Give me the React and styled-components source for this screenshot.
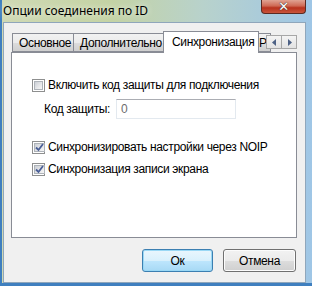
import React from "react";
import styled, { createGlobalStyle } from "styled-components";

const Global = createGlobalStyle`
  html, body {
    margin: 0;
    padding: 0;
    overflow: hidden;
  }
  body {
    font-family: "Liberation Sans", Arial, sans-serif;
    font-size: 12px;
    letter-spacing: -0.35px;
    color: #000;
  }
`;

const Window = styled.div`
  width: 312px;
  height: 286px;
  box-sizing: border-box;
  display: flex;
  flex-direction: column;
  background: linear-gradient(90deg, #cfd9b4 0%, #c4d3a4 35%, #b8d2cc 65%, #9fc6e6 100%);
  border-left: 2px solid #3f7fbf;
  border-bottom: 3px solid #3f7fbf;
`;

const TitleBar = styled.div`
  height: 22px;
  display: flex;
  align-items: flex-start;
  justify-content: space-between;
`;

const Title = styled.div`
  padding: 3px 0 0 1px;
  font-family: "Noto Sans", "Open Sans", sans-serif;
  font-size: 12px;
  letter-spacing: 0;
  line-height: 16px;
  text-shadow: 0 0 6px rgba(255, 255, 255, 0.9);
`;

const CloseButton = styled.div`
  width: 45px;
  height: 14px;
  margin-right: 6px;
  box-sizing: border-box;
  border: 1px solid #5b2a22;
  border-top: none;
  border-radius: 0 0 4px 4px;
  background: linear-gradient(180deg, #e0a393 0%, #cf6a55 45%, #b8321d 60%, #c9553c 100%);
  display: flex;
  align-items: center;
  justify-content: center;
  color: #fff;
  font-family: "DejaVu Sans", sans-serif;
  font-weight: bold;
  font-size: 13px;
  line-height: 13px;
  text-shadow: 0 0 1px #333, 0 0 1px #333;
`;

const Client = styled.div`
  flex: 1;
  margin-right: 6px;
  margin-left: 1px;
  background: #f0f0f0;
  border: 1px solid #8fa6bb;
  display: flex;
  flex-direction: column;
  padding: 8px 8px 9px 7px;
`;

const TabStrip = styled.div`
  height: 21px;
  display: flex;
  align-items: flex-end;
  position: relative;
  padding-left: 1px;
`;

const Tab = styled.div`
  box-sizing: border-box;
  height: ${(p) => (p.$active ? "22px" : "19px")};
  margin: ${(p) => (p.$active ? "0 -2px -1px -2px" : "0")};
  padding: ${(p) => (p.$active ? "2px 0 0 8px" : `1px 0 0 ${p.$pad ?? 6}px`)};
  border: 1px solid #898c95;
  border-bottom: ${(p) => (p.$active ? "none" : "1px solid #898c95")};
  border-left: ${(p) => (p.$first || p.$active ? "1px solid #898c95" : "none")};
  background: ${(p) =>
    p.$active ? "#fff" : "linear-gradient(180deg, #f2f2f2 0%, #ebebeb 50%, #dddddd 51%, #cfcfcf 100%)"};
  position: relative;
  z-index: ${(p) => (p.$active ? 2 : 1)};
  white-space: nowrap;
  line-height: 16px;
  overflow: hidden;
  width: ${(p) => p.$w}px;
`;

const Scroller = styled.div`
  position: absolute;
  right: 0;
  top: 4px;
  display: flex;
  z-index: 3;
`;

const ScrollButton = styled.div`
  width: 16px;
  height: 14px;
  box-sizing: border-box;
  border: 1px solid #a7a7a7;
  margin-left: -1px;
  background: linear-gradient(180deg, #f4f4f4, #e2e2e2);
  display: flex;
  align-items: center;
  justify-content: center;
`;

const Panel = styled.div`
  height: 186px;
  box-sizing: border-box;
  background: #fff;
  border: 1px solid #898c95;
  padding: 24px 0 0 20px;
  display: flex;
  flex-direction: column;
`;

const CheckRow = styled.label`
  display: flex;
  align-items: center;
  gap: 3px;
  height: 16px;
  margin-top: ${(p) => p.$mt || 0}px;
`;

const Box = styled.span`
  width: 13px;
  height: 13px;
  box-sizing: border-box;
  border: 1px solid #8e8f8f;
  background: #fff;
  padding: 1px;
  display: flex;
  span {
    flex: 1;
    background: linear-gradient(135deg, #cbcfd5 0%, #e7e8ea 60%, #f6f6f6 100%);
    border: 1px solid #aeb3b9;
    display: flex;
    align-items: center;
    justify-content: center;
  }
`;

const FieldRow = styled.div`
  display: flex;
  align-items: center;
  margin: 6px 0 0 12px;
  gap: 6px;
`;

const Input = styled.div`
  width: 120px;
  height: 20px;
  box-sizing: border-box;
  border: 1px solid #e3e9ef;
  border-top-color: #abadb3;
  background: #fff;
  color: #6d6d6d;
  padding: 2px 0 0 4px;
  line-height: 15px;
`;

const Footer = styled.div`
  display: flex;
  justify-content: flex-end;
  gap: 10px;
  margin-top: 11px;
  padding-right: 1px;
`;

const Button = styled.div`
  width: ${(p) => (p.$primary ? 71 : 73)}px;
  height: 23px;
  box-sizing: border-box;
  border: 1px solid ${(p) => (p.$primary ? "#3c7fb1" : "#707070")};
  border-radius: 3px;
  box-shadow: inset 0 0 0 1px ${(p) => (p.$primary ? "#9ad8f5" : "#fcfcfc")};
  background: ${(p) =>
    p.$primary
      ? "linear-gradient(180deg, #eaf6fd 0%, #d9f0fc 50%, #bee6fd 51%, #a7d9f5 100%)"
      : "linear-gradient(180deg, #f2f2f2 0%, #ebebeb 50%, #dddddd 51%, #cfcfcf 100%)"};
  display: flex;
  align-items: center;
  justify-content: center;
  line-height: 16px;
`;

const Check = ({ checked }) => (
  <Box>
    <span>
      {checked && (
        <svg width="9" height="9" viewBox="0 0 9 9">
          <path d="M1 4.5 L3.5 7 L8 1" fill="none" stroke="#4a5f97" strokeWidth="1.8" />
        </svg>
      )}
    </span>
  </Box>
);

const Arrow = ({ dir }) => (
  <svg width="5" height="7" viewBox="0 0 5 7">
    <path d={dir === "left" ? "M4 0 L0 3.5 L4 7 Z" : "M1 0 L5 3.5 L1 7 Z"} fill="#4d6185" />
  </svg>
);

export default function App() {
  return (
    <>
      <Global />
      <Window>
        <TitleBar>
          <Title>Опции соединения по ID</Title>
          <CloseButton>✕</CloseButton>
        </TitleBar>
        <Client>
          <TabStrip>
            <Tab $first $w={62}>Основное</Tab>
            <Tab $w={91}>Дополнительно</Tab>
            <Tab $active $w={96}>Синхронизация</Tab>
            <Tab $w={14} $pad={2}>Ра</Tab>
            <Scroller>
              <ScrollButton><Arrow dir="left" /></ScrollButton>
              <ScrollButton><Arrow dir="right" /></ScrollButton>
            </Scroller>
          </TabStrip>
          <Panel>
            <CheckRow>
              <Check />
              Включить код защиты для подключения
            </CheckRow>
            <FieldRow>
              Код защиты:
              <Input>0</Input>
            </FieldRow>
            <CheckRow $mt={20}>
              <Check checked />
              Синхронизировать настройки через NOIP
            </CheckRow>
            <CheckRow $mt={6}>
              <Check checked />
              Синхронизация записи экрана
            </CheckRow>
          </Panel>
          <Footer>
            <Button $primary>Ок</Button>
            <Button>Отмена</Button>
          </Footer>
        </Client>
      </Window>
    </>
  );
}
